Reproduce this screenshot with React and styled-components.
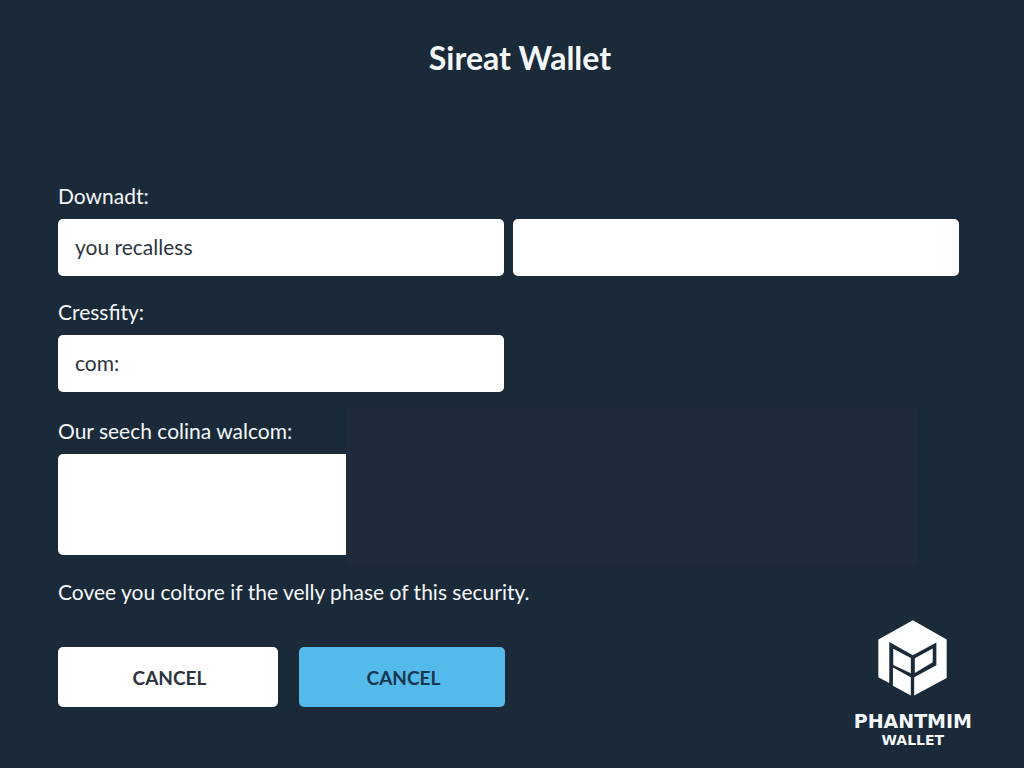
import React from "react";
import styled, { createGlobalStyle } from "styled-components";

const GlobalStyle = createGlobalStyle`
  * { box-sizing: border-box; }
  body {
    margin: 0;
    background: #1b2a38;
    color: #f4f8fb;
    font-family: Lato, "Open Sans", sans-serif;
    font-size: 21px;
    line-height: 24px;
  }
`;

const Page = styled.main`
  min-height: 100vh;
  padding-top: 38px;
`;

const Title = styled.h1`
  margin: 0 50px 106px 66px;
  font-size: 32px;
  line-height: 40px;
  font-weight: 700;
  text-align: center;
`;

const Form = styled.form`
  display: flex;
  flex-direction: column;
`;

const FieldRow = styled.div`
  display: grid;
  grid-template-columns: 1fr 1fr;
  align-items: end;
  gap: 9px;
  margin: 0 65px 24px 58px;
`;

const Field = styled.div`
  display: flex;
  flex-direction: column;
  gap: 11px;
`;

const TextInput = styled.input`
  width: 100%;
  height: 57px;
  padding: 0 17px 2px;
  border: 0;
  border-radius: 5px;
  background: #fff;
  color: #2b343e;
  font: inherit;
`;

const PhraseRow = styled.div`
  display: grid;
  grid-template-columns: 288px 1fr;
  margin: -9px 106px 0 58px;
`;

const PhraseField = styled(Field)`
  padding: 12px 0 11px;
`;

const TextArea = styled.textarea`
  display: block;
  width: 100%;
  height: 101px;
  padding: 16px;
  border: 0;
  border-radius: 5px 0 0 5px;
  background: #fff;
  color: #2b343e;
  font: inherit;
  resize: none;
`;

const Panel = styled.div`
  background: #1f2b3a;
`;

const Footer = styled.footer`
  display: flex;
  justify-content: space-between;
  align-items: flex-start;
  padding: 14px 52px 0 58px;
`;

const Note = styled.p`
  margin: 0 0 43px;
`;

const Actions = styled.div`
  display: grid;
  grid-template-columns: 220px 206px;
  gap: 21px;
`;

const Button = styled.button`
  height: 60px;
  padding: 2px 0 0 3px;
  border: 0;
  border-radius: 5px;
  background: ${(p) => (p.$primary ? "#54b9eb" : "#fff")};
  color: ${(p) => (p.$primary ? "#173650" : "#2b343e")};
  font: inherit;
  font-size: 19px;
  font-weight: 700;
  cursor: pointer;
`;

const Brand = styled.div`
  display: flex;
  flex-direction: column;
  align-items: center;
  padding-top: 40px;
  font-family: "DejaVu Sans", sans-serif;
  font-weight: 700;
`;

const BrandName = styled.span`
  margin-top: 13px;
  font-size: 19px;
  line-height: 24px;
`;

const BrandSub = styled.span`
  font-size: 14px;
  line-height: 14px;
`;

function Logo() {
  return (
    <svg width="69" height="76" viewBox="114 31 208 228" fill="#fff" aria-hidden="true">
      <path d="M219 31 321 89V205L223 258V203L290 167V98L219 137 148 97V220L115 203V89Z" />
      <path d="M160 117 213 145V191L160 166Z" />
      <path d="M225 146 279 116V158L225 190Z" />
      <path d="M159 174 213 203V258L159 229Z" />
    </svg>
  );
}

export default function App() {
  return (
    <>
      <GlobalStyle />
      <Page>
        <Title>Sireat Wallet</Title>
        <Form onSubmit={(e) => e.preventDefault()}>
          <FieldRow>
            <Field>
              <label id="downadt-label" htmlFor="downadt">Downadt:</label>
              <TextInput id="downadt" defaultValue="you recalless" />
            </Field>
            <TextInput aria-labelledby="downadt-label" />
          </FieldRow>
          <FieldRow>
            <Field>
              <label htmlFor="cressfity">Cressfity:</label>
              <TextInput id="cressfity" defaultValue="com:" />
            </Field>
          </FieldRow>
          <PhraseRow>
            <PhraseField>
              <label htmlFor="phrase">Our seech colina walcom:</label>
              <TextArea id="phrase" />
            </PhraseField>
            <Panel />
          </PhraseRow>
          <Footer>
            <div>
              <Note>Covee you coltore if the velly phase of this security.</Note>
              <Actions>
                <Button type="button">CANCEL</Button>
                <Button type="button" $primary>CANCEL</Button>
              </Actions>
            </div>
            <Brand>
              <Logo />
              <BrandName>PHANTMIM</BrandName>
              <BrandSub>WALLET</BrandSub>
            </Brand>
          </Footer>
        </Form>
      </Page>
    </>
  );
}
